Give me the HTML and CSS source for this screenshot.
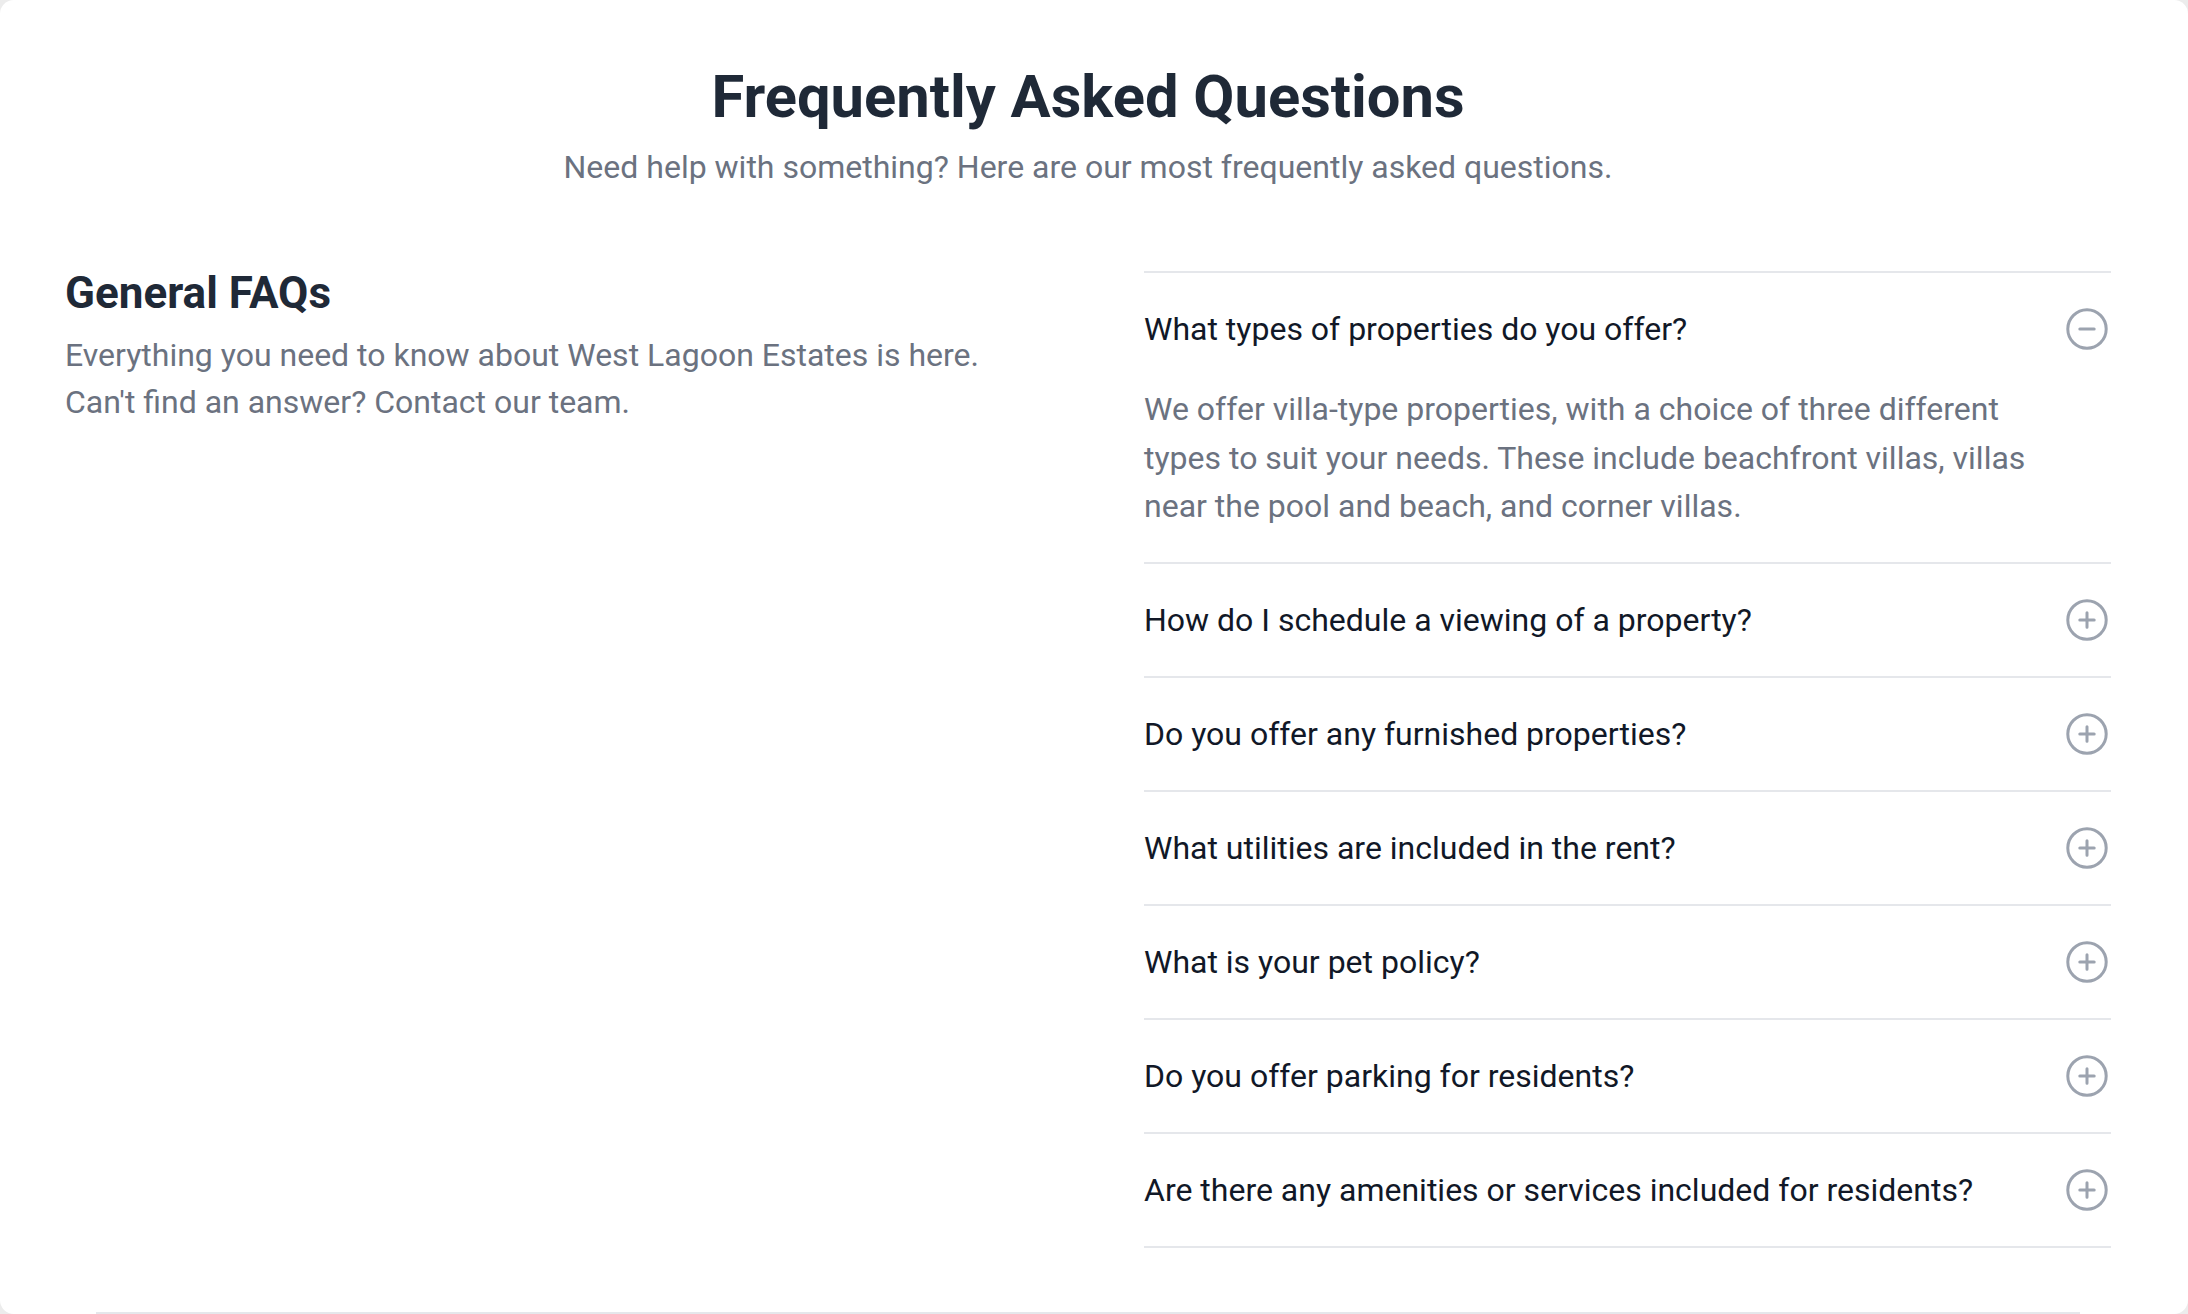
FILE: index.html
```html
<!DOCTYPE html>
<html lang="en">
<head>
<meta charset="utf-8">
<title>Frequently Asked Questions</title>
<link rel="stylesheet" href="styles.css">
</head>
<body>
<div class="card">
  <section class="faq">
    <header class="faq-header">
      <h1 class="faq-title">Frequently Asked Questions</h1>
      <p class="faq-subtitle">Need help with something? Here are our most frequently asked questions.</p>
    </header>
    <div class="faq-grid">
      <div class="faq-intro">
        <h2 class="intro-title">General FAQs</h2>
        <p class="intro-text">Everything you need to know about West Lagoon Estates is here. Can't find an answer? Contact our team.</p>
      </div>
      <div class="faq-list">
        <div class="faq-item">
          <button class="faq-q"><span>What types of properties do you offer?</span>
            <svg class="faq-icon" viewBox="0 0 48 48"><circle cx="24" cy="24" r="19.2"/><path d="M16.8 24h14.4"/></svg>
          </button>
          <p class="faq-a">We offer villa-type properties, with a choice of three different types to suit your needs. These include beachfront villas, villas near the pool and beach, and corner villas.</p>
        </div>
        <div class="faq-item">
          <button class="faq-q"><span>How do I schedule a viewing of a property?</span>
            <svg class="faq-icon" viewBox="0 0 48 48"><circle cx="24" cy="24" r="19.2"/><path d="M16.8 24h14.4M24 16.8v14.4"/></svg>
          </button>
        </div>
        <div class="faq-item">
          <button class="faq-q"><span>Do you offer any furnished properties?</span>
            <svg class="faq-icon" viewBox="0 0 48 48"><circle cx="24" cy="24" r="19.2"/><path d="M16.8 24h14.4M24 16.8v14.4"/></svg>
          </button>
        </div>
        <div class="faq-item">
          <button class="faq-q"><span>What utilities are included in the rent?</span>
            <svg class="faq-icon" viewBox="0 0 48 48"><circle cx="24" cy="24" r="19.2"/><path d="M16.8 24h14.4M24 16.8v14.4"/></svg>
          </button>
        </div>
        <div class="faq-item">
          <button class="faq-q"><span>What is your pet policy?</span>
            <svg class="faq-icon" viewBox="0 0 48 48"><circle cx="24" cy="24" r="19.2"/><path d="M16.8 24h14.4M24 16.8v14.4"/></svg>
          </button>
        </div>
        <div class="faq-item">
          <button class="faq-q"><span>Do you offer parking for residents?</span>
            <svg class="faq-icon" viewBox="0 0 48 48"><circle cx="24" cy="24" r="19.2"/><path d="M16.8 24h14.4M24 16.8v14.4"/></svg>
          </button>
        </div>
        <div class="faq-item">
          <button class="faq-q"><span>Are there any amenities or services included for residents?</span>
            <svg class="faq-icon" viewBox="0 0 48 48"><circle cx="24" cy="24" r="19.2"/><path d="M16.8 24h14.4M24 16.8v14.4"/></svg>
          </button>
        </div>
      </div>
    </div>
  </section>
  <div class="card-rule"></div>
</div>
</body>
</html>
```
FILE: styles.css
```css
html, body {
  margin: 0;
  padding: 0;
  background: #ececec;
}
body {
  font-family: Roboto, "Liberation Sans", sans-serif;
}
.card {
  background: #ffffff;
  border-radius: 14px;
  height: 1314px;
  display: flex;
  flex-direction: column;
  overflow: hidden;
  box-sizing: border-box;
}
.faq {
  padding: 64px 77px 0 65px;
}
.faq-header {
  text-align: center;
}
.faq-title {
  margin: 0;
  font-size: 59.7px;
  line-height: 66.7px;
  font-weight: 700;
  color: #1f2937;
}
.faq-subtitle {
  margin: 13px 0 0;
  font-size: 32px;
  line-height: 46.7px;
  color: #6b7280;
}
.faq-grid {
  display: grid;
  grid-template-columns: 1fr 1fr;
  column-gap: 112px;
  margin-top: 81px;
  align-items: start;
}
.intro-title {
  margin: 0;
  font-size: 44px;
  line-height: 44px;
  font-weight: 700;
  color: #1f2937;
}
.intro-text {
  margin: 17px 0 0;
  font-size: 32px;
  line-height: 46.7px;
  color: #6b7280;
}
.faq-item {
  border-top: 2px solid #e5e7eb;
}
.faq-item:last-child {
  border-bottom: 2px solid #e5e7eb;
}
.faq-q {
  display: flex;
  width: 100%;
  justify-content: space-between;
  align-items: center;
  padding: 32.7px 0;
  margin: 0;
  border: 0;
  background: none;
  font-family: inherit;
  font-size: 32px;
  line-height: 46.7px;
  color: #111827;
  text-align: left;
  cursor: pointer;
}
.faq-icon {
  width: 48px;
  height: 48px;
  margin: -1px 0;
  flex: none;
  fill: none;
  stroke: #9ca3af;
  stroke-width: 3;
  stroke-linecap: round;
}
.faq-a {
  margin: 0;
  padding: 0 80px 31px 0;
  font-size: 32px;
  line-height: 48.5px;
  color: #6b7280;
}
.card-rule {
  margin: auto 108px 0 96px;
  height: 2px;
  flex: none;
  background: #e5e7eb;
}
```
